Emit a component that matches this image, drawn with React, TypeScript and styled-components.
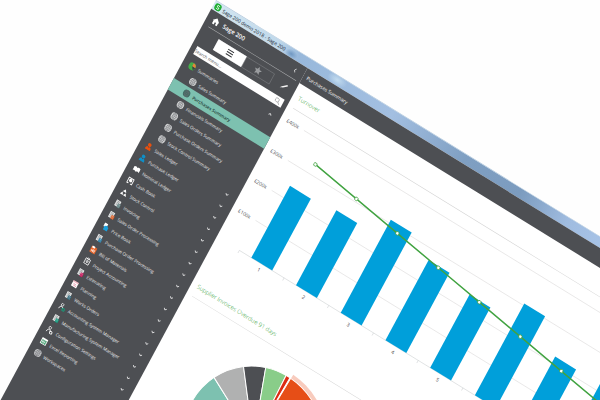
import React from "react";
import styled, { createGlobalStyle } from "styled-components";

const GlobalStyle = createGlobalStyle`
  * { box-sizing: border-box; }
  body { margin: 0; background: #fefefe; overflow: hidden; }
  button, input { font: inherit; color: inherit; border: 0; padding: 0; margin: 0; }
`;

const Stage = styled.div`
  height: 100vh;
  overflow: hidden;
  padding-left: 36vw;
  background: #fefefe;
  font-family: "Open Sans", "Noto Sans", sans-serif;
`;

const Window = styled.div`
  display: flex;
  flex-direction: column;
  width: 220vw;
  min-height: 240vh;
  transform-origin: 0 0;
  transform: rotate(31.6deg) skewX(3.3deg) scale(0.5);
  background: #fff;
`;

const TitleBar = styled.header`
  display: flex;
  align-items: center;
  gap: 4px;
  height: 20px;
  padding-left: 3px;
  font-size: 10px;
  color: #16222e;
  border-top: 1px solid #a9c2d8;
  background:
    radial-gradient(ellipse 14px 9px at 975px 13px, #4c70a0 0%, transparent 100%),
    radial-gradient(ellipse 14px 9px at 184px 12px, #6f97c2 0%, transparent 100%),
    radial-gradient(ellipse 22px 12px at 290px 8px, #c3dcef 0%, transparent 100%),
    linear-gradient(90deg, #d3e6f1 0, #c0d8ea 150px, #98b8db 200px, #a3bfe1 420px, #7f9fc2 590px, #7c9cbf 720px, #a0bce0 830px, #a9c5e8 940px, #9bb9dc 1100px);
`;

const Body = styled.div`
  display: flex;
  flex: 1;
`;

const Sidebar = styled.aside`
  display: flex;
  flex-direction: column;
  flex: none;
  width: 226px;
  background: #4d4f53;
  color: #e9e9ea;
  font-size: 9px;
`;

const Brand = styled.div`
  display: flex;
  align-items: center;
  gap: 8px;
  height: 34px;
  margin: 0 8px 0 12px;
  border-bottom: 1px solid #b4b5b7;
  color: #fff;
  font-size: 12px;
  font-weight: 600;
`;

const Collapse = styled.button`
  display: flex;
  margin-left: auto;
  padding-right: 9px;
  background: none;
`;

const Tools = styled.div`
  display: flex;
  align-items: center;
  justify-content: space-between;
  margin: 10px 16px 10px 42px;
`;

const Switcher = styled.div`
  display: flex;
`;

const SwitchTab = styled.button<{ $active?: boolean }>`
  display: flex;
  align-items: center;
  justify-content: center;
  width: 66px;
  height: 24px;
  border: 1px solid ${(p) => (p.$active ? "#fff" : "#808285")};
  background: ${(p) => (p.$active ? "#fff" : "transparent")};
`;

const EditButton = styled.button`
  display: flex;
  background: none;
`;

const SearchBox = styled.label`
  display: flex;
  align-items: center;
  height: 18px;
  margin: 0 10px 9px 11px;
  padding-right: 5px;
  background: #fff;
  color: #55575a;
`;

const SearchInput = styled.input`
  flex: 1;
  min-width: 0;
  height: 16px;
  background: none;
  outline: none;
  &::placeholder { color: #55575a; opacity: 1; }
`;

const Row = styled.button<{ $level: number; $selected?: boolean }>`
  display: flex;
  align-items: center;
  gap: 6px;
  width: 100%;
  height: 26px;
  padding: 0 18px 0 ${(p) => (p.$level ? 29 : 13)}px;
  text-align: left;
  white-space: nowrap;
  color: ${(p) => (p.$selected ? "#1f3b36" : "#e9e9ea")};
  font-weight: ${(p) => (p.$selected ? 600 : 400)};
  background: ${(p) => (p.$selected ? "#7dc1b0" : "transparent")};
`;

const RowLabel = styled.span`
  flex: 1;
`;

const Main = styled.main`
  display: flex;
  flex-direction: column;
  flex: 1;
  min-width: 0;
`;

const PageHeader = styled.h1`
  display: flex;
  align-items: center;
  height: 34px;
  margin: 0;
  padding-left: 8px;
  background: #4d4f53;
  color: #f1f1f1;
  font-size: 10px;
  font-weight: 400;
`;

const Panel = styled.section`
  padding: 16px 0 0 13px;
`;

const PanelTitle = styled.h2`
  margin: 0;
  padding-bottom: 11px;
  border-bottom: 1px solid #d3d3d3;
  color: #2f9e35;
  font-size: 12px;
  line-height: 22px;
  font-weight: 300;
`;

const Chart = styled.svg`
  display: block;
  width: 100%;
  height: 376px;
  overflow: hidden;
  font-size: 10px;
`;

const Icon = ({ kind }: { kind: string }) => {
  const [name, tint = "#fff"] = kind.split(":");
  return (
    <svg width="16" height="16" viewBox="0 0 16 16" fill="none" aria-hidden="true">
      {name === "pie" && (
        <>
          <circle cx="8" cy="8" r="7.500" fill="#43b049" />
          <path d="M8 8V1a7 7 0 0 1 7 7z" fill="#e8833a" />
          <path d="M8 8h7a7 7 0 0 1-3 5.700z" fill="#3c4245" />
        </>
      )}
      {name === "globe" && (
        <>
          <circle cx="8" cy="8" r="7.500" fill={tint} />
          <path d="M1 8h14M8 1v14M2.500 4.500h11M2.500 11.500h11" stroke="#6d6f73" strokeWidth="0.800" />
          <ellipse cx="8" cy="8" rx="3.600" ry="7" stroke="#6d6f73" strokeWidth="0.900" />
        </>
      )}
      {name === "person" && (
        <>
          <circle cx="8" cy="4.500" r="3.700" fill={tint} />
          <path d="M2 15c0-5 2-6 4-6.500l2 2 2-2c2 .5 4 1.500 4 6.500z" fill={tint} />
        </>
      )}
      {name === "book" && (
        <path d="M1 4c3-2 5-1.500 7 .5C10 2.500 12 2 15 4v8c-3-1.500-5-1-7 1-2-2-4-2.500-7-1z" fill="#fff" />
      )}
      {name === "cash" && (
        <>
          <path d="M2.500 2.500h11v11h-11z" stroke="#fff" strokeWidth="1.800" />
          <circle cx="8" cy="7" r="3.400" fill="#fff" />
          <path d="M5 15l3-5 3 5z" fill="#4d4f53" />
        </>
      )}
      {name === "stock" && (
        <>
          <path d="M8 1l4 6H4z" fill="#fff" />
          <path d="M4.500 8l3.500 6H1zM11.500 8l3.500 6H8z" fill="#fff" />
        </>
      )}
      {name === "doc" && (
        <>
          <path d="M2 1h10v13H2z" fill="#e6e8e8" />
          <path d="M4 3.500h6M4 6h6M4 8.500h3M4 11h3" stroke="#6c7073" strokeWidth="1" />
          <path d="M7.500 7H14v8H7.500z" fill={tint} />
          <path d="M9 9h3.500M9 11h1M11.500 11h1M9 13h1M11.500 13h1" stroke="#fff" strokeWidth="0.700" />
        </>
      )}
      {name === "price" && (
        <>
          <path d="M3 1h7v8H3z" fill="#fff" />
          <path d="M5 7l5-2 4 3v7H5z" fill={tint} />
        </>
      )}
      {name === "bom" && (
        <>
          <path d="M2 2h12v13H2z" fill={tint} />
          <path d="M3 1h6v4H3z" fill="#fff" />
          <path d="M5 8v5M8 7v6M11 7v6M5 10h6" stroke="#fff" strokeWidth="1.200" />
        </>
      )}
      {name === "clip" && (
        <>
          <path d="M3 3h10v11H3z" stroke="#fff" strokeWidth="1.500" />
          <path d="M6 1h4v3H6zM5 7h6M5 9.500h6M8 6v6" stroke="#fff" strokeWidth="1.200" />
        </>
      )}
      {name === "plan" && (
        <>
          <path d="M2 3h12v11H2z" fill="#fff" />
          <path d="M2 2h12v3H2z" fill="#f2b9c4" />
          <path d="M5 8h3M9 8h2M5 11h2M8 11h4" stroke="#d85f7c" strokeWidth="1.300" />
        </>
      )}
      {name === "admin" && (
        <>
          <circle cx="6" cy="4" r="2.600" stroke="#fff" strokeWidth="1.400" />
          <path d="M2 14c0-4 1.500-6 4-6s3 1 3.500 3" stroke="#fff" strokeWidth="1.600" />
          <circle cx="11.500" cy="12" r="2.600" stroke={tint} strokeWidth="1.800" />
        </>
      )}
      {name === "excel" && (
        <>
          <path d="M1.500 1.500h13v13h-13z" fill="#fff" />
          <path d="M3 5h10v8H3z" fill="#3a9a68" />
          <path d="M3 9h10M9.500 5v8M4 6l4 6M8 6l-4 6" stroke="#fff" strokeWidth="0.900" />
        </>
      )}
    </svg>
  );
};

const Chevron = ({ up }: { up?: boolean }) => (
  <svg width="8" height="8" viewBox="0 0 8 8" fill="none" stroke="#fff" strokeWidth="1.400" aria-hidden="true">
    <path d={up ? "M1 5.500L4 2.500l3 3" : "M1 2.500L4 5.500l3-3"} />
  </svg>
);

type Item = { label: string; icon: string; level?: number; arrow?: "up" | "down"; selected?: boolean };

const items: Item[] = [
  { label: "Summaries", icon: "pie", arrow: "up" },
  { label: "Sales Summary", icon: "globe:#d4d5d6", level: 1 },
  { label: "Purchases Summary", icon: "globe:#3f6c64", level: 1, selected: true },
  { label: "Financials Summary", icon: "globe:#d4d5d6", level: 1 },
  { label: "Sales Orders Summary", icon: "globe:#d4d5d6", level: 1 },
  { label: "Purchase Orders Summary", icon: "globe:#d4d5d6", level: 1 },
  { label: "Stock Control Summary", icon: "globe:#d4d5d6", level: 1 },
  { label: "Sales Ledger", icon: "person:#e8500f", arrow: "down" },
  { label: "Purchase Ledger", icon: "person:#0f8fc8", arrow: "down" },
  { label: "Nominal Ledger", icon: "book", arrow: "down" },
  { label: "Cash Book", icon: "cash", arrow: "down" },
  { label: "Stock Control", icon: "stock", arrow: "down" },
  { label: "Invoicing", icon: "doc:#5f7f80", arrow: "down" },
  { label: "Sales Order Processing", icon: "doc:#d9602a", arrow: "down" },
  { label: "Price Book", icon: "price:#1b9fdc", arrow: "down" },
  { label: "Purchase Order Processing", icon: "doc:#2a7ba3", arrow: "down" },
  { label: "Bill of Materials", icon: "bom:#e8652a", arrow: "down" },
  { label: "Project Accounting", icon: "clip", arrow: "down" },
  { label: "Estimating", icon: "doc:#c2185b", arrow: "down" },
  { label: "Planning", icon: "plan", arrow: "down" },
  { label: "Works Orders", icon: "doc:#33697c", arrow: "down" },
  { label: "Accounting System Manager", icon: "admin:#14a37f", arrow: "down" },
  { label: "Manufacturing System Manager", icon: "doc:#14957a", arrow: "down" },
  { label: "Configuration Settings", icon: "admin:#fff", arrow: "down" },
  { label: "Excel Reporting", icon: "excel", arrow: "down" },
  { label: "Workspaces", icon: "globe:#c4c5c7" },
];

const AXIS_X = 40;
const BASE_Y = 298;
const STEP = 105;
const bars = [
  { height: 163, label: "1" },
  { height: 170, label: "2" },
  { height: 211, label: "3" },
  { height: 182, label: "4" },
  { height: 166, label: "5" },
  { height: 208 },
  { height: 150 },
  { height: 164 },
];
const gridLines = [
  { label: "£400k", y: 26 },
  { label: "£300k", y: 94 },
  { label: "£200k", y: 162 },
  { label: "£100k", y: 230 },
];
const trend = bars.map((_, i) => ({ x: AXIS_X + STEP * (i + 0.5), y: 72 + 15.7 * i }));

const TurnoverChart = () => (
  <Chart role="img" aria-label="Turnover by period">
    {gridLines.map((g) => (
      <g key={g.label}>
        <text x="0" y={g.y + 4} fill="#55575a">{g.label}</text>
        <line x1={AXIS_X} x2="100%" y1={g.y} y2={g.y} stroke="#d8d6d6" />
      </g>
    ))}
    <line x1={AXIS_X} x2="100%" y1={BASE_Y} y2={BASE_Y} stroke="#c9cccf" />
    {bars.map((bar, i) => (
      <g key={i}>
        <line x1={AXIS_X + STEP * i} x2={AXIS_X + STEP * i} y1={BASE_Y} y2={BASE_Y + 6} stroke="#c9cccf" />
        <rect x={AXIS_X + 28 + STEP * i} y={BASE_Y - bar.height} width="49" height={bar.height} fill="#009fda" />
        {bar.label && (
          <text x={AXIS_X + STEP * (i + 0.5)} y={BASE_Y + 16} textAnchor="middle" fill="#3f4144">{bar.label}</text>
        )}
      </g>
    ))}
    <polyline points={trend.map((p) => `${p.x},${p.y}`).join(" ")} fill="none" stroke="#41a341" strokeWidth="3" />
    {trend.map((p) => (
      <circle key={p.x} cx={p.x} cy={p.y} r="3.500" fill="#fff" stroke="#41a341" strokeWidth="1.500" />
    ))}
  </Chart>
);

const PIE = { cx: 245, cy: 181, r: 145 };
const slices = [
  { from: -140, to: -62.9, fill: "#7dc1b0" },
  { from: -62.9, to: -37.1, fill: "#b0b1b1" },
  { from: -37.1, to: -19, fill: "#4d4f53" },
  { from: -19, to: -1.5, fill: "#89cd89" },
  { from: -1.5, to: 2.1, fill: "#dc2c12" },
  { from: 2.8, to: 100, fill: "#e64e17" },
  { from: 100, to: 220, fill: "#009fda" },
];
const wedge = (from: number, to: number, r: number) => {
  const at = (deg: number) => {
    const a = (deg * Math.PI) / 180;
    return `${PIE.cx + r * Math.sin(a)} ${PIE.cy - r * Math.cos(a)}`;
  };
  return `M${PIE.cx} ${PIE.cy}L${at(from)}A${r} ${r} 0 0 1 ${at(to)}Z`;
};

const OverdueChart = () => (
  <Chart role="img" aria-label="Supplier invoices overdue">
    <path d={wedge(3, 100, 154)} fill="#f8cbbd" />
    {slices.map((s) => (
      <path key={s.from} d={wedge(s.from, s.to, PIE.r)} fill={s.fill} stroke="#fff" strokeWidth="2" />
    ))}
  </Chart>
);

export default function App() {
  return (
    <Stage>
      <GlobalStyle />
      <Window>
        <TitleBar>
          <svg width="15" height="15" viewBox="0 0 14 14" aria-hidden="true">
            <circle cx="7" cy="7" r="7" fill="#20b035" />
            <path d="M9.500 4.500C8 2.500 4.500 3.500 5 5.500s4.500 1.500 4.500 3.500-3.500 2-5 .5" fill="none" stroke="#fff" strokeWidth="1.600" />
          </svg>
          Sage 200 demo 2018 - Sage 200
        </TitleBar>
        <Body>
          <Sidebar>
            <Brand>
              <svg width="17" height="16" viewBox="0 0 17 16" fill="#fff" aria-hidden="true">
                <path d="M8.500 1L16 8h-2v7h-4v-5H7v5H3V8H1z" />
              </svg>
              Sage 200
              <Collapse aria-label="Collapse menu">
                <svg width="5" height="10" viewBox="0 0 5 10" fill="none" stroke="#fff" strokeWidth="1.200">
                  <path d="M4 1L1 5l3 4" />
                </svg>
              </Collapse>
            </Brand>
            <Tools>
              <Switcher>
                <SwitchTab $active aria-label="Menu">
                  <svg width="16" height="14" viewBox="0 0 16 14" stroke="#3b3d40" strokeWidth="2.200">
                    <path d="M1 2h14M1 7h14M1 12h14" />
                  </svg>
                </SwitchTab>
                <SwitchTab aria-label="Favourites">
                  <svg width="18" height="18" viewBox="0 0 18 18" fill="#9a9c9f">
                    <path d="M9 1l2.400 5.400 5.600.6-4.200 3.900 1.200 5.700L9 13.700l-5 2.900 1.200-5.700L1 7l5.600-.6z" />
                  </svg>
                </SwitchTab>
              </Switcher>
              <EditButton aria-label="Edit">
                <svg width="16" height="14" viewBox="0 0 16 14" fill="#f4f4f4">
                  <path d="M1 13l3-4 9-8 2 2-8 7-3 1z" />
                </svg>
              </EditButton>
            </Tools>
            <SearchBox>
              <SearchInput aria-label="Search menu" placeholder="Search menu..." />
              <svg width="14" height="14" viewBox="0 0 14 14" fill="none" stroke="#8d8f92" strokeWidth="1.200" aria-hidden="true">
                <circle cx="6" cy="6" r="4" />
                <path d="M9 9l4 4" />
              </svg>
            </SearchBox>
            <nav>
              {items.map((item) => (
                <Row key={item.label} $level={item.level ?? 0} $selected={item.selected}>
                  <Icon kind={item.icon} />
                  <RowLabel>{item.label}</RowLabel>
                  {item.arrow && <Chevron up={item.arrow === "up"} />}
                </Row>
              ))}
            </nav>
          </Sidebar>
          <Main>
            <PageHeader>Purchases Summary</PageHeader>
            <Panel>
              <PanelTitle>Turnover</PanelTitle>
              <TurnoverChart />
            </Panel>
            <Panel>
              <PanelTitle>Supplier Invoices Overdue 91 days</PanelTitle>
              <OverdueChart />
            </Panel>
          </Main>
        </Body>
      </Window>
    </Stage>
  );
}
